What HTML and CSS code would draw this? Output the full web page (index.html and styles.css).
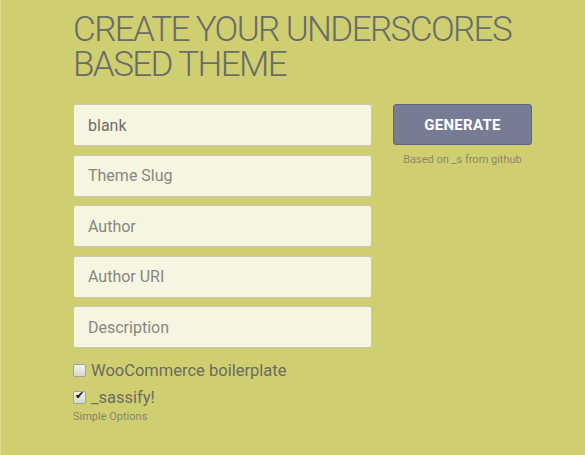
FILE: index.html
```html
<!DOCTYPE html>
<html>
<head>
<meta charset="utf-8">
<link rel="stylesheet" href="styles.css">
</head>
<body>
<div class="page">
  <h1 class="title">CREATE YOUR UNDERSCORES<br>BASED THEME</h1>
  <form class="generator">
    <div class="fields">
      <input class="field" type="text" value="blank">
      <input class="field" type="text" placeholder="Theme Slug">
      <input class="field" type="text" placeholder="Author">
      <input class="field" type="text" placeholder="Author URI">
      <input class="field" type="text" placeholder="Description">
      <label class="check"><input type="checkbox"> WooCommerce boilerplate</label>
      <label class="check"><input type="checkbox" checked> _sassify!</label>
      <a class="simple">Simple Options</a>
    </div>
    <div class="side">
      <button class="generate" type="button">GENERATE</button>
      <p class="based">Based on _s from github</p>
    </div>
  </form>
</div>
</body>
</html>
```
FILE: styles.css
```css
html, body {
  margin: 0;
  padding: 0;
  background: #cfcf72;
  height: 100%;
}
body {
  font-family: "Roboto", "Liberation Sans", sans-serif;
  color: #6b6b66;
  border-left: 1px solid #d9d98a;
  box-sizing: border-box;
}
.page {
  padding: 12px 0 0 72px;
}
.title {
  margin: 0;
  font-weight: 300;
  font-size: 35px;
  line-height: 35px;
  letter-spacing: -1.6px;
  color: #6a6c66;
}
.generator {
  display: flex;
  gap: 21px;
  margin-top: 22px;
}
.fields {
  display: flex;
  flex-direction: column;
  width: 299px;
}
.field {
  box-sizing: border-box;
  height: 42px;
  margin: 0 0 8.5px;
  padding: 0 14px;
  background: #f6f5e1;
  border: 1px solid #c9c9b3;
  border-radius: 3px;
  font-family: inherit;
  font-size: 16px;
  color: #6e6e6a;
}
.field::placeholder { color: #87877f; }
.check {
  display: flex;
  align-items: center;
  gap: 5px;
  font-size: 16.5px;
  color: #6b6b5f;
  height: 27px;
}
.check input {
  -webkit-appearance: none;
  appearance: none;
  position: relative;
  margin: 0;
  width: 13px;
  height: 13px;
  border: 1px solid #a3a39a;
  border-radius: 2px;
  background: linear-gradient(#f2f2f0, #d6d6d2);
}
.check input:checked::after {
  content: "\2714";
  position: absolute;
  left: 1px;
  top: -3px;
  font-size: 11px;
  color: #111;
}
.simple {
  font-size: 11px;
  color: #86866a;
  margin-top: -1px;
}
.side {
  width: 139px;
  display: flex;
  flex-direction: column;
  align-items: center;
}
.generate {
  width: 139px;
  height: 41px;
  background: #777b93;
  border: 1px solid #62667c;
  border-radius: 3px;
  color: #fff;
  font-family: inherit;
  font-weight: 700;
  font-size: 15px;
  letter-spacing: 0.3px;
}
.based {
  margin: 8px 0 0;
  font-size: 11px;
  color: #8a8a64;
}
```
